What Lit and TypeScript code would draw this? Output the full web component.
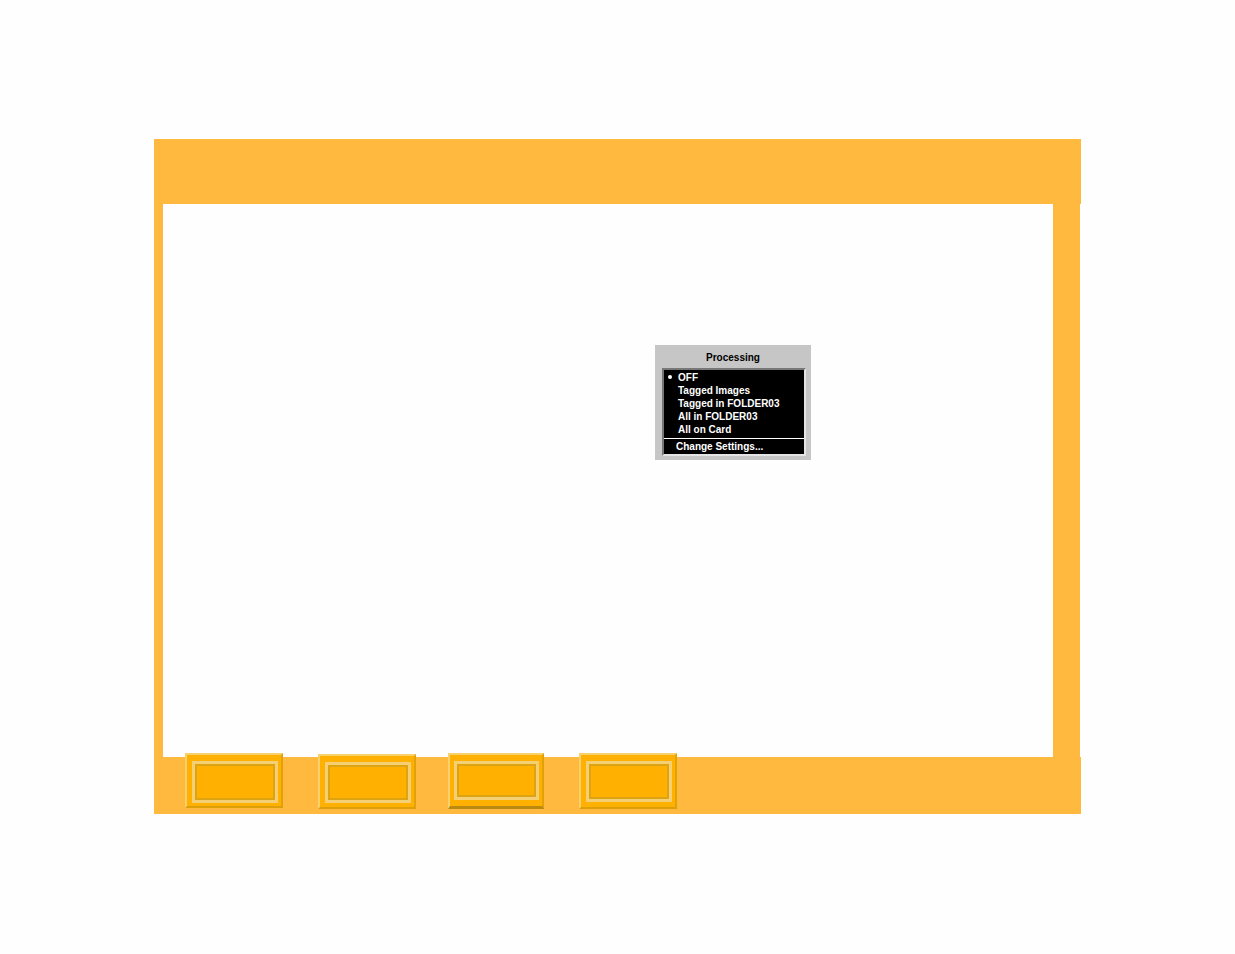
import { LitElement, html, css } from "lit";
import { customElement } from "lit/decorators.js";

const items = ["OFF", "Tagged Images", "Tagged in FOLDER03", "All in FOLDER03", "All on Card"];

@customElement("app-root")
export class AppRoot extends LitElement {
  static styles = css`
    :host { display: block; width: 1235px; height: 954px; background: #fefefe; font-family: "Liberation Sans", Arial, sans-serif; overflow: hidden; }
    .frame { display: flex; flex-direction: column; width: 927px; margin-left: 154px; padding-top: 139px; }
    .top { height: 65px; background: #ffb93e; }
    .mid { display: flex; height: 553px; }
    .left { width: 9px; background: #ffb93e; }
    .canvas { width: 890px; background: #fefefe; padding: 141px 0 0 492px; box-sizing: border-box; }
    .right { width: 27px; background: #ffb93e; }
    .bottom { height: 57px; background: #ffb93e; display: flex; align-items: flex-start; }
    .btn { box-sizing: border-box; background: #ffb000; border: 2px solid; border-color: #f8d06c #e0a208 #dc9f08 #f8d06c; margin-top: -4px; flex: none; }
    .inner { height: 100%; box-sizing: border-box; border: 3px solid #f4cf74; box-shadow: inset 2px 2px 0 #dca412, inset -2px -2px 0 #dca412; }
    .b1 { width: 98px; height: 55px; margin-left: 31px; padding: 6px 3px 3px 5px; }
    .b2 { width: 98px; height: 55px; margin-left: 35px; margin-top: -3px; padding: 6px 3px 4px 5px; }
    .b3 { width: 96px; height: 56px; margin-left: 32px; padding: 6px 3px 6px 4px; border-bottom: 3px solid #b98a10; }
    .b4 { width: 98px; height: 56px; margin-left: 35px; padding: 6px 3px 5px 5px; }
    .panel { width: 156px; height: 115px; background: #c6c6c6; box-sizing: border-box; padding: 6px 5px 4px 7px; display: flex; flex-direction: column; color: #fff; font-size: 10px; font-weight: 700; }
    .title { color: #000; text-align: center; line-height: 14px; height: 17px; flex: none; padding-right: 2px; }
    .list { flex: 1; background: #000; border: 2px solid; border-color: #777 #e4e4e4 #e4e4e4 #777; display: flex; flex-direction: column; padding-top: 1px; }
    .row { height: 13px; line-height: 13px; padding-left: 14px; position: relative; white-space: nowrap; }
    .dot { position: absolute; left: 4px; top: 4px; width: 4px; height: 4px; border-radius: 50%; background: #fff; }
    .sep { height: 1px; background: #fff; margin-top: 2px; flex: none; }
    .change { padding-left: 12px; line-height: 15px; height: 15px; white-space: nowrap; }
  `;
  render() {
    return html`<div class="frame">
      <div class="top"></div>
      <div class="mid">
        <div class="left"></div>
        <div class="canvas">
          <div class="panel">
            <div class="title">Processing</div>
            <div class="list">
              ${items.map((t, i) => html`<div class="row">${i === 0 ? html`<span class="dot"></span>` : ""}${t}</div>`)}
              <div class="sep"></div>
              <div class="change">Change Settings...</div>
            </div>
          </div>
        </div>
        <div class="right"></div>
      </div>
      <div class="bottom">
        ${["b1", "b2", "b3", "b4"].map((c) => html`<div class="btn ${c}"><div class="inner"></div></div>`)}
      </div>
    </div>`;
  }
}
